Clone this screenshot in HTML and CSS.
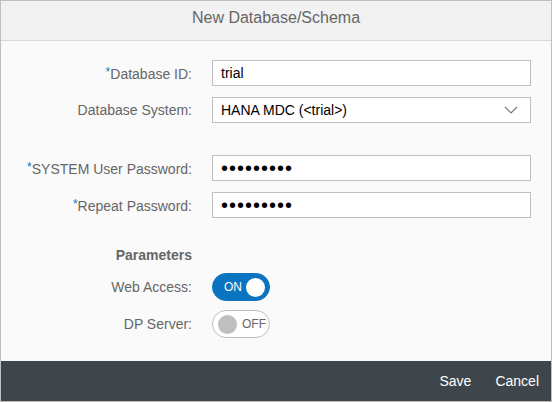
FILE: index.html
```html
<!DOCTYPE html>
<html>
<head>
<meta charset="utf-8">
<link rel="stylesheet" href="styles.css">
</head>
<body>
<div class="dialog">
  <header class="dialog-header">New Database/Schema</header>
  <main class="dialog-body">
    <div class="row">
      <label class="label"><span class="req">*</span>Database ID:</label>
      <input class="field" type="text" value="trial">
    </div>
    <div class="row row-gap-lg">
      <label class="label">Database System:</label>
      <div class="field select">
        <span>HANA MDC (&lt;trial&gt;)</span>
        <svg class="chevron" width="14" height="8" viewBox="0 0 14 8"><path d="M1 1 L7 7 L13 1" fill="none" stroke="#777" stroke-width="1.2"/></svg>
      </div>
    </div>
    <div class="row">
      <label class="label"><span class="req">*</span>SYSTEM User Password:</label>
      <input class="field pw" type="password" value="trialtria">
    </div>
    <div class="row">
      <label class="label"><span class="req">*</span>Repeat Password:</label>
      <input class="field pw" type="password" value="trialtria">
    </div>
    <div class="heading-row">
      <div class="label heading">Parameters</div>
    </div>
    <div class="row toggle-row">
      <label class="label">Web Access:</label>
      <div class="switch on"><span class="switch-text">ON</span><span class="knob"></span></div>
    </div>
    <div class="row toggle-row">
      <label class="label">DP Server:</label>
      <div class="switch off"><span class="knob"></span><span class="switch-text">OFF</span></div>
    </div>
  </main>
  <footer class="dialog-footer">
    <button class="btn">Save</button>
    <button class="btn">Cancel</button>
  </footer>
</div>
</body>
</html>
```
FILE: styles.css
```css
* { box-sizing: border-box; }
html, body { margin: 0; padding: 0; }
body {
  font-family: "Liberation Sans", Arial, sans-serif;
  font-size: 14px;
  color: #666;
}
.dialog {
  width: 552px;
  height: 402px;
  border: 1px solid #bfbfbf;
  display: flex;
  flex-direction: column;
  background: #fafafa;
}
.dialog-header {
  height: 40px;
  flex: none;
  background: #f2f2f2;
  border-bottom: 1px solid #d9d9d9;
  display: flex;
  align-items: center;
  justify-content: center;
  font-size: 16px;
  color: #666;
  padding-bottom: 5px;
}
.dialog-body {
  flex: 1;
  padding-top: 19px;
}
.row {
  display: flex;
  align-items: center;
  height: 26px;
  margin-bottom: 11px;
}
.row-gap-lg { margin-bottom: 32px; }
.label {
  width: 191px;
  flex: none;
  text-align: right;
  margin-right: 20px;
  color: #666;
  font-size: 14px;
}
.req {
  color: #0a74c0;
  font-size: 12px;
  vertical-align: 3px;
}
.field {
  width: 319px;
  height: 26px;
  border: 1px solid #bfbfbf;
  background: #fff;
  font-family: "Liberation Sans", Arial, sans-serif;
  font-size: 14px;
  color: #000;
  padding: 0 8px;
  margin: 0;
  outline: none;
}
.select {
  display: flex;
  align-items: center;
  justify-content: space-between;
  padding-right: 12px;
}
.chevron { display: block; }
.pw {
  font-size: 20px;
  letter-spacing: 1px;
}
.heading-row {
  margin-top: 28px;
  height: 18px;
  display: flex;
  align-items: center;
  margin-bottom: 9px;
}
.heading { font-weight: bold; }
.toggle-row {
  height: 28px;
  margin-bottom: 9px;
}
.switch {
  width: 58px;
  height: 28px;
  border-radius: 14px;
  display: flex;
  align-items: center;
  font-size: 12px;
}
.switch.on {
  background: #0a74c0;
  border: 1px solid #0a74c0;
  color: #fff;
  padding: 0 4px 0 11px;
  justify-content: space-between;
}
.switch.off {
  background: #fff;
  border: 1px solid #bfbfbf;
  color: #666;
  padding: 0 0 0 5px;
  gap: 5px;
}
.knob {
  width: 19px;
  height: 19px;
  border-radius: 50%;
  display: block;
  flex: none;
}
.on .knob { background: #fff; }
.off .knob { background: #bfbfbf; }
.dialog-footer {
  height: 40px;
  flex: none;
  background: #3f464b;
  display: flex;
  align-items: center;
  justify-content: flex-end;
  padding-right: 2px;
  gap: 4px;
}
.btn {
  background: none;
  border: none;
  color: #fff;
  font-family: "Liberation Sans", Arial, sans-serif;
  font-size: 14px;
  padding: 0 10px;
  cursor: pointer;
}
```
